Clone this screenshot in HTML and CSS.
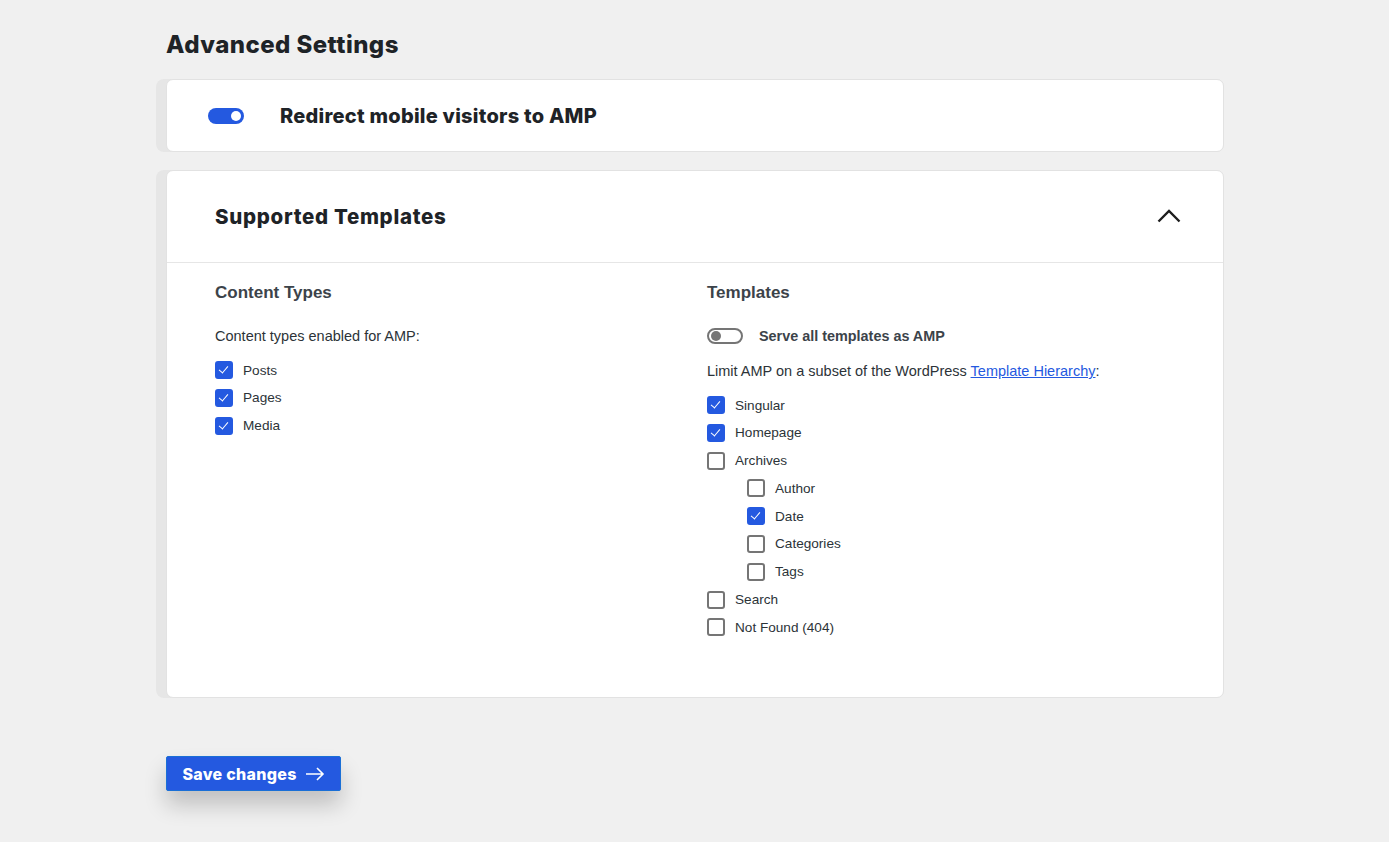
FILE: index.html
```html
<!DOCTYPE html>
<html lang="en">
<head>
<meta charset="utf-8">
<title>Advanced Settings</title>
<link rel="stylesheet" href="styles.css">
</head>
<body>
<div class="page">
  <h1 class="page-title">Advanced Settings</h1>

  <div class="panel-wrap">
    <div class="panel panel-toggle">
      <span class="toggle toggle-on"><span class="knob"></span></span>
      <span class="panel-toggle-label">Redirect mobile visitors to AMP</span>
    </div>
  </div>

  <div class="panel-wrap panel-wrap-2">
    <div class="panel">
      <div class="panel-header">
        <h2 class="panel-title">Supported Templates</h2>
        <svg class="chevron" width="24" height="14" viewBox="0 0 24 14"><path d="M1.5 12.5 L12 2 L22.5 12.5" fill="none" stroke="#1e1e1e" stroke-width="2.4"/></svg>
      </div>
      <div class="panel-body">
        <div class="col">
          <h3 class="col-title">Content Types</h3>
          <p class="desc">Content types enabled for AMP:</p>
          <ul class="checks">
            <li><span class="cb on"></span>Posts</li>
            <li><span class="cb on"></span>Pages</li>
            <li><span class="cb on"></span>Media</li>
          </ul>
        </div>
        <div class="col">
          <h3 class="col-title">Templates</h3>
          <div class="serve-row">
            <span class="toggle toggle-off"><span class="knob"></span></span>
            <span class="serve-label">Serve all templates as AMP</span>
          </div>
          <p class="desc">Limit AMP on a subset of the WordPress <a href="#">Template Hierarchy</a>:</p>
          <ul class="checks checks-right">
            <li><span class="cb on"></span>Singular</li>
            <li><span class="cb on"></span>Homepage</li>
            <li><span class="cb"></span>Archives</li>
            <li class="sub"><span class="cb"></span>Author</li>
            <li class="sub"><span class="cb on"></span>Date</li>
            <li class="sub"><span class="cb"></span>Categories</li>
            <li class="sub"><span class="cb"></span>Tags</li>
            <li><span class="cb"></span>Search</li>
            <li><span class="cb"></span>Not Found (404)</li>
          </ul>
        </div>
      </div>
    </div>
  </div>

  <div class="actions">
    <button class="save-btn" type="button">Save changes
      <svg width="20" height="14" viewBox="0 0 20 14"><path d="M1 7 H18 M12 1 L18 7 L12 13" fill="none" stroke="#fff" stroke-width="1.6"/></svg>
    </button>
  </div>
</div>
</body>
</html>
```

FILE: styles.css
```css
* { box-sizing: border-box; }
html, body { margin: 0; padding: 0; }
body {
  background: #f0f0f0;
  font-family: "Liberation Sans", Arial, sans-serif;
  color: #2c3338;
}
.page {
  width: 1068px;
  margin-left: 156px;
  padding-top: 30px;
  padding-bottom: 50px;
}
.page-title {
  margin: 0 0 19px 10px;
  font-family: Inter, "Liberation Sans", sans-serif;
  font-weight: 800;
  font-size: 24px;
  line-height: 30px;
  color: #1e2327;
  letter-spacing: 0.45px;
}
.panel-wrap {
  background: #e6e6e6;
  border-radius: 8px;
  padding-left: 10px;
}
.panel-wrap-2 { margin-top: 18px; }
.panel {
  background: #fff;
  border: 1px solid #e2e2e2;
  border-radius: 7px;
}
.panel-toggle {
  height: 73px;
  display: flex;
  align-items: center;
  padding-left: 41px;
}
.toggle {
  display: inline-flex;
  align-items: center;
  width: 36px;
  height: 16px;
  border-radius: 8px;
  flex: none;
}
.toggle-on {
  background: #2459e0;
  justify-content: flex-end;
  padding-right: 3px;
}
.toggle-on .knob {
  width: 10px; height: 10px; border-radius: 50%; background: #fff;
}
.toggle-off {
  border: 2px solid #757575;
  padding-left: 2px;
}
.toggle-off .knob {
  width: 10px; height: 10px; border-radius: 50%; background: #757575;
}
.panel-toggle-label {
  margin-left: 36px;
  font-family: Inter, "Liberation Sans", sans-serif;
  font-weight: 800;
  font-size: 20px;
  letter-spacing: 0.25px;
  color: #1e2327;
}
.panel-header {
  height: 92px;
  border-bottom: 1px solid #e6e6e6;
  display: flex;
  align-items: center;
  justify-content: space-between;
  padding: 0 42px 0 48px;
}
.panel-title {
  margin: 0;
  font-family: Inter, "Liberation Sans", sans-serif;
  font-weight: 800;
  font-size: 20.5px;
  letter-spacing: 0.7px;
  color: #1e2327;
}
.chevron { display: block; margin-top: -2px; }
.panel-body {
  display: grid;
  grid-template-columns: 468px 468px;
  column-gap: 24px;
  padding: 20px 48px 61px;
}
.col-title {
  margin: 0 0 24px;
  font-size: 17px;
  line-height: 20px;
  font-weight: 700;
  color: #3c434a;
}
.desc {
  margin: 0 0 16px;
  font-size: 14.5px;
  line-height: 18px;
  color: #2c3338;
}
.desc a { color: #2459e0; text-decoration: underline; }
.checks {
  list-style: none;
  margin: 0;
  padding: 0;
  display: flex;
  flex-direction: column;
  gap: 9.8px;
}
.checks li {
  display: flex;
  align-items: center;
  height: 18px;
  font-size: 13.6px;
  color: #2c3338;
}
.checks li.sub { padding-left: 40px; }
.cb {
  width: 18px;
  height: 18px;
  border: 2px solid #757575;
  border-radius: 3px;
  margin-right: 10px;
  flex: none;
  position: relative;
  background: #fff;
}
.cb.on {
  background: #2459e0;
  border-color: #2459e0;
}
.cb.on::after {
  content: "";
  position: absolute;
  left: 4px;
  top: 1px;
  width: 4px;
  height: 8px;
  border-right: 1.3px solid #fff;
  border-bottom: 1.3px solid #fff;
  transform: rotate(40deg);
}
.serve-row {
  display: flex;
  align-items: center;
  height: 18px;
  margin-bottom: 17px;
}
.serve-label {
  margin-left: 16px;
  font-size: 14.4px;
  font-weight: 700;
  color: #3c434a;
}
.actions {
  padding: 58px 0 0 10px;
}
.save-btn {
  height: 35px;
  width: 175px;
  display: flex;
  align-items: center;
  justify-content: center;
  gap: 8px;
  background: #2459e0;
  color: #fff;
  border: 1px solid #1a6fd6;
  border-radius: 2px;
  font-family: Inter, "Liberation Sans", sans-serif;
  font-weight: 800;
  font-size: 16px;
  letter-spacing: 0.3px;
  box-shadow: 0 14px 22px rgba(0,0,0,0.2);
  cursor: pointer;
  padding: 0;
}
```
